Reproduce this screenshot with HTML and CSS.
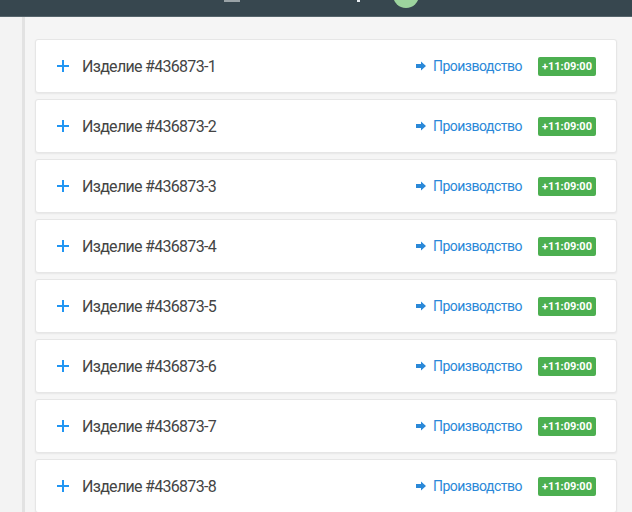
FILE: index.html
```html
<!DOCTYPE html>
<html lang="ru">
<head>
  <meta charset="UTF-8" />
  <meta name="viewport" content="width=device-width, initial-scale=1" />
  <title>Изделия</title>
  <link rel="stylesheet" href="styles.css">
</head>
<body>
  <div class="topbar">
    <span class="tb-bar"></span>
    <span class="tb-dot"></span>
    <span class="tb-avatar"></span>
  </div>
  <div class="layout">
    <div class="side"></div>
    <div class="divider"></div>
    <div class="main">
      <div class="card">
        <span class="plus"></span>
        <span class="title">Изделие #436873-1</span>
        <a class="stage" href="#"><svg width="10" height="10" viewBox="0 0 10 10"><path d="M0 3h5V0.5L10 5 5 9.5V7H0z" fill="currentColor"/></svg>Производство</a>
        <span class="badge">+11:09:00</span>
      </div>
      <div class="card">
        <span class="plus"></span>
        <span class="title">Изделие #436873-2</span>
        <a class="stage" href="#"><svg width="10" height="10" viewBox="0 0 10 10"><path d="M0 3h5V0.5L10 5 5 9.5V7H0z" fill="currentColor"/></svg>Производство</a>
        <span class="badge">+11:09:00</span>
      </div>
      <div class="card">
        <span class="plus"></span>
        <span class="title">Изделие #436873-3</span>
        <a class="stage" href="#"><svg width="10" height="10" viewBox="0 0 10 10"><path d="M0 3h5V0.5L10 5 5 9.5V7H0z" fill="currentColor"/></svg>Производство</a>
        <span class="badge">+11:09:00</span>
      </div>
      <div class="card">
        <span class="plus"></span>
        <span class="title">Изделие #436873-4</span>
        <a class="stage" href="#"><svg width="10" height="10" viewBox="0 0 10 10"><path d="M0 3h5V0.5L10 5 5 9.5V7H0z" fill="currentColor"/></svg>Производство</a>
        <span class="badge">+11:09:00</span>
      </div>
      <div class="card">
        <span class="plus"></span>
        <span class="title">Изделие #436873-5</span>
        <a class="stage" href="#"><svg width="10" height="10" viewBox="0 0 10 10"><path d="M0 3h5V0.5L10 5 5 9.5V7H0z" fill="currentColor"/></svg>Производство</a>
        <span class="badge">+11:09:00</span>
      </div>
      <div class="card">
        <span class="plus"></span>
        <span class="title">Изделие #436873-6</span>
        <a class="stage" href="#"><svg width="10" height="10" viewBox="0 0 10 10"><path d="M0 3h5V0.5L10 5 5 9.5V7H0z" fill="currentColor"/></svg>Производство</a>
        <span class="badge">+11:09:00</span>
      </div>
      <div class="card">
        <span class="plus"></span>
        <span class="title">Изделие #436873-7</span>
        <a class="stage" href="#"><svg width="10" height="10" viewBox="0 0 10 10"><path d="M0 3h5V0.5L10 5 5 9.5V7H0z" fill="currentColor"/></svg>Производство</a>
        <span class="badge">+11:09:00</span>
      </div>
      <div class="card">
        <span class="plus"></span>
        <span class="title">Изделие #436873-8</span>
        <a class="stage" href="#"><svg width="10" height="10" viewBox="0 0 10 10"><path d="M0 3h5V0.5L10 5 5 9.5V7H0z" fill="currentColor"/></svg>Производство</a>
        <span class="badge">+11:09:00</span>
      </div>
    </div>
  </div>
</body>
</html>
```

FILE: styles.css
```css
html, body {
  margin: 0;
  height: 100%;
  overflow: hidden;
}
body {
  font-family: Roboto, "Liberation Sans", sans-serif;
  background: #f5f5f5;
  color: #333;
}
.topbar {
  height: 16px;
  background: #37474f;
  border-bottom: 1px solid #56656c;
  display: flex;
  align-items: flex-start;
  overflow: hidden;
}
.tb-bar {
  width: 16px;
  height: 2px;
  margin-left: 224px;
  background: #9aa3a7;
}
.tb-dot {
  width: 3px;
  height: 2px;
  margin-left: 117px;
  background: #e8eef2;
}
.tb-avatar {
  width: 26px;
  height: 26px;
  margin-left: 33px;
  margin-top: -18px;
  border-radius: 50%;
  background: #9dd49e;
}
.layout {
  display: flex;
  height: 100%;
}
.side {
  width: 22px;
  background: #f3f3f3;
}
.divider {
  width: 3px;
  background: #e2e2e2;
}
.main {
  flex: 1;
  padding: 22px 15px 0 10px;
}
.card {
  display: flex;
  align-items: center;
  height: 52px;
  margin-bottom: 6px;
  padding: 0 20px 0 21px;
  background: #fff;
  border: 1px solid #e6e6e6;
  border-radius: 3px;
  box-shadow: 0 1px 2px rgba(0,0,0,0.06);
}
.plus {
  position: relative;
  width: 12px;
  height: 12px;
  margin-right: 13px;
}
.plus::before, .plus::after {
  content: "";
  position: absolute;
  background: #2196f3;
}
.plus::before {
  left: 0;
  top: 5px;
  width: 12px;
  height: 2px;
}
.plus::after {
  left: 5px;
  top: 0;
  width: 2px;
  height: 12px;
}
.title {
  flex: 1;
  font-size: 16px;
  letter-spacing: -0.7px;
  color: #444;
}
.stage {
  display: flex;
  align-items: center;
  gap: 7px;
  font-size: 14px;
  letter-spacing: -0.5px;
  color: #2a88d8;
  text-decoration: none;
}
.badge {
  margin-left: 16px;
  padding: 0 4px;
  height: 19px;
  line-height: 19px;
  background: #4caf50;
  color: #fff;
  font-size: 11px;
  font-weight: bold;
  border-radius: 2px;
}
```
